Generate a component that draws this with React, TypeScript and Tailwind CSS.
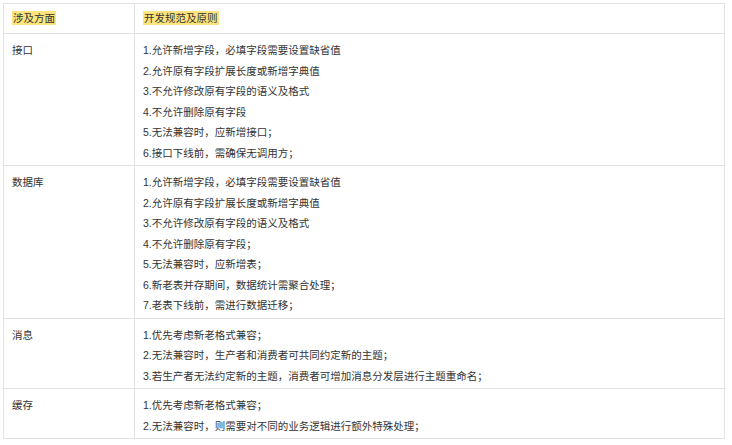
import React from "react";

const rows = [
  {
    aspect: "接口",
    rules: [
      "1.允许新增字段，必填字段需要设置缺省值",
      "2.允许原有字段扩展长度或新增字典值",
      "3.不允许修改原有字段的语义及格式",
      "4.不允许删除原有字段",
      "5.无法兼容时，应新增接口；",
      "6.接口下线前，需确保无调用方；",
    ],
  },
  {
    aspect: "数据库",
    rules: [
      "1.允许新增字段，必填字段需要设置缺省值",
      "2.允许原有字段扩展长度或新增字典值",
      "3.不允许修改原有字段的语义及格式",
      "4.不允许删除原有字段；",
      "5.无法兼容时，应新增表；",
      "6.新老表并存期间，数据统计需聚合处理；",
      "7.老表下线前，需进行数据迁移；",
    ],
  },
  {
    aspect: "消息",
    rules: [
      "1.优先考虑新老格式兼容；",
      "2.无法兼容时，生产者和消费者可共同约定新的主题；",
      "3.若生产者无法约定新的主题，消费者可增加消息分发层进行主题重命名；",
    ],
  },
  {
    aspect: "缓存",
    rules: [
      "1.优先考虑新老格式兼容；",
      "2.无法兼容时，则需要对不同的业务逻辑进行额外特殊处理；",
    ],
  },
];

export default function App() {
  return (
    <div
      className="w-[732px] h-[445px] bg-white pl-[3px] pt-[3px] text-[10.5px] text-[#333]"
      style={{ fontFamily: '"Liberation Sans", "Noto Sans CJK SC", sans-serif' }}
    >
      <table className="w-[722px] border-collapse table-fixed">
        <colgroup>
          <col className="w-[131px]" />
          <col />
        </colgroup>
        <thead>
          <tr>
            <th className="border border-[#e3e3e3] h-[30px] px-[8px] text-left font-normal align-middle">
              <span className="bg-[#fde47c] px-[1px] py-[1px]">涉及方面</span>
            </th>
            <th className="border border-[#e3e3e3] h-[30px] px-[8px] text-left font-normal align-middle">
              <span className="bg-[#fde47c] px-[1px] py-[1px]">开发规范及原则</span>
            </th>
          </tr>
        </thead>
        <tbody>
          {rows.map((r) => (
            <tr key={r.aspect}>
              <td className="border border-[#e3e3e3] px-[8px] pt-[6px] pb-[2px] align-top leading-[20.5px]">
                {r.aspect}
              </td>
              <td className="border border-[#e3e3e3] px-[8px] pt-[6px] pb-[2px] align-top">
                {r.rules.map((t) => (
                  <div key={t} className="leading-[20.5px] whitespace-nowrap">
                    {t}
                  </div>
                ))}
              </td>
            </tr>
          ))}
        </tbody>
      </table>
    </div>
  );
}
